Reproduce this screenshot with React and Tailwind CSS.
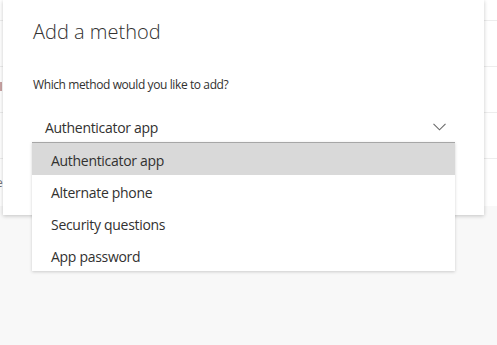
import React from 'react';

const options = ['Authenticator app', 'Alternate phone', 'Security questions', 'App password'];

export default function App() {
  return (
    <div className="relative w-full h-[345px] overflow-hidden bg-[#f8f8f8] text-[#323130] font-['Open_Sans',sans-serif]">
      {/* page behind the dialog */}
      <div className="bg-white">
        <div className="h-[21px] border-b border-[#ededed]" />
        <div className="h-[46px] border-b border-[#ededed]" />
        <div className="h-[46px] border-b border-[#ededed] flex items-start pt-[15px]">
          <span className="w-[2px] h-[9px] bg-[#c9a3a3]" />
        </div>
        <div className="h-[46px] border-b border-[#ededed]" />
        <div className="h-[47px] flex items-center">
          <span className="text-[12px] leading-none text-[#777] -ml-[4px]">e</span>
        </div>
      </div>

      {/* dialog */}
      <div className="absolute left-[3px] top-0 w-[481px] h-[215px] bg-white shadow-[0_1px_4px_rgba(0,0,0,0.22)] pl-[30px] pt-[18px]">
        <h1 className="text-[20px] font-light leading-[28px] text-[#323130]">Add a method</h1>
        <p className="mt-[31px] text-[12px] leading-[16px] tracking-[-0.4px]">Which method would you like to add?</p>
        <div className="mt-[23px] ml-[12px] mr-[38px] h-[22px] flex items-center justify-between">
          <span className="text-[14px] tracking-[-0.3px]">Authenticator app</span>
          <svg width="13" height="8" viewBox="0 0 13 8" className="-mt-[1px]">
            <path d="M0.5 0.8 L6.5 6.8 L12.5 0.8" fill="none" stroke="#6a6a6a" strokeWidth="1.1" />
          </svg>
        </div>
      </div>

      {/* open listbox */}
      <ul className="absolute left-[32px] top-[142px] w-[423px] bg-white border-t border-[#a6a6a6] shadow-[0_1px_3px_rgba(0,0,0,0.18)]">
        {options.map((o, i) => (
          <li
            key={o}
            className={`h-[32px] flex items-center pl-[19px] pt-[3px] text-[14px] tracking-[-0.3px] ${i === 0 ? 'bg-[#d9d9d9]' : ''}`}
          >
            {o}
          </li>
        ))}
      </ul>
    </div>
  );
}
